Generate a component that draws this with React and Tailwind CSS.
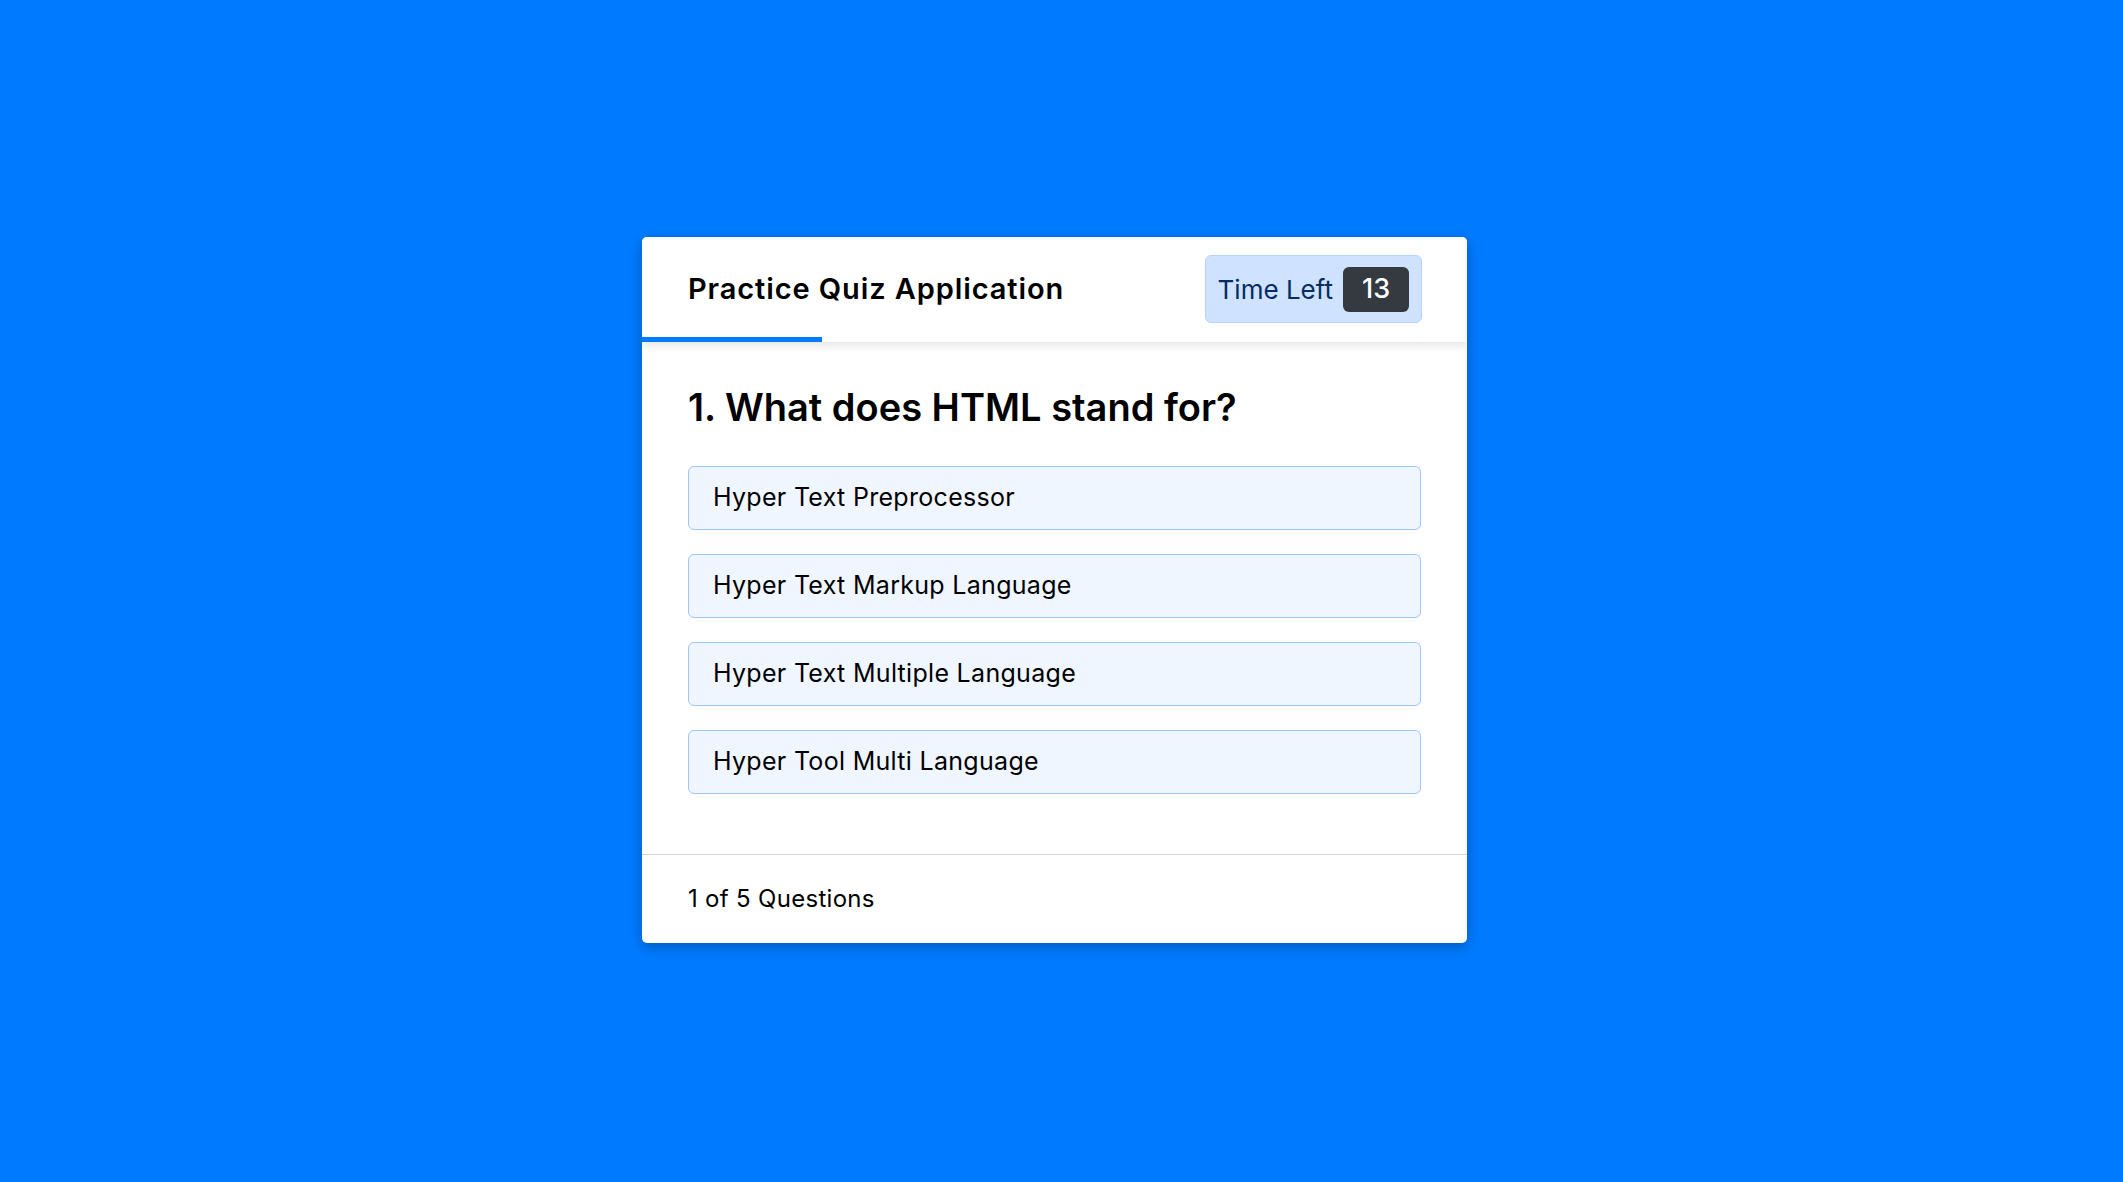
import React from 'react';

const options = [
  'Hyper Text Preprocessor',
  'Hyper Text Markup Language',
  'Hyper Text Multiple Language',
  'Hyper Tool Multi Language',
];

function App() {
  const [timeLeft] = React.useState(13);
  const current = 1;
  const total = 5;

  return (
    <div className="min-h-screen bg-[#007bff] flex items-start justify-center pt-[237px] pr-[14px] font-['Inter',sans-serif]">
      <div className="w-[825px] bg-white rounded-[5px] shadow-[0_4px_14px_rgba(0,0,0,0.28)] overflow-hidden">
        {/* Header */}
        <header className="relative z-10 bg-white shadow-[0_4px_8px_rgba(0,0,0,0.1)]">
          <div className="flex items-center justify-between pl-[46px] pr-[45px] pt-[18px] pb-[14px]">
            <h1 className="text-[29px] font-semibold text-black tracking-[0.9px]">Practice Quiz Application</h1>
            <div className="flex items-center gap-[10px] h-[68px] pl-[12px] pr-[12px] bg-[#cfe2ff] border border-[#b6d4fe] rounded-[6px]">
              <span className="text-[26px] text-[#052c65]">Time Left</span>
              <span className="w-[66px] h-[45px] flex items-center justify-center bg-[#343a40] text-white text-[27px] font-medium rounded-[6px]">
                {timeLeft}
              </span>
            </div>
          </div>
          <div className="h-[5px] w-[180px] bg-[#007bff]" />
        </header>

        {/* Question */}
        <section className="px-[46px] pt-[41px] pb-[60px]">
          <h2 className="text-[38px] font-semibold text-black leading-[48px]">{current}. What does HTML stand for?</h2>
          <ul className="mt-[35px] flex flex-col gap-[24px]">
            {options.map((opt) => (
              <li
                key={opt}
                className="h-[64px] flex items-center px-[24px] bg-[#eff6ff] border border-[#9ec5fe] rounded-[6px] text-[25px] tracking-[0.3px] text-black"
              >
                {opt}
              </li>
            ))}
          </ul>
        </section>

        {/* Footer */}
        <footer className="border-t border-[#d4d4d4] h-[89px] flex items-center pl-[46px]">
          <span className="text-[24px] tracking-[0.3px] text-black">{current} of {total} Questions</span>
        </footer>
      </div>
    </div>
  );
}

export default App;
